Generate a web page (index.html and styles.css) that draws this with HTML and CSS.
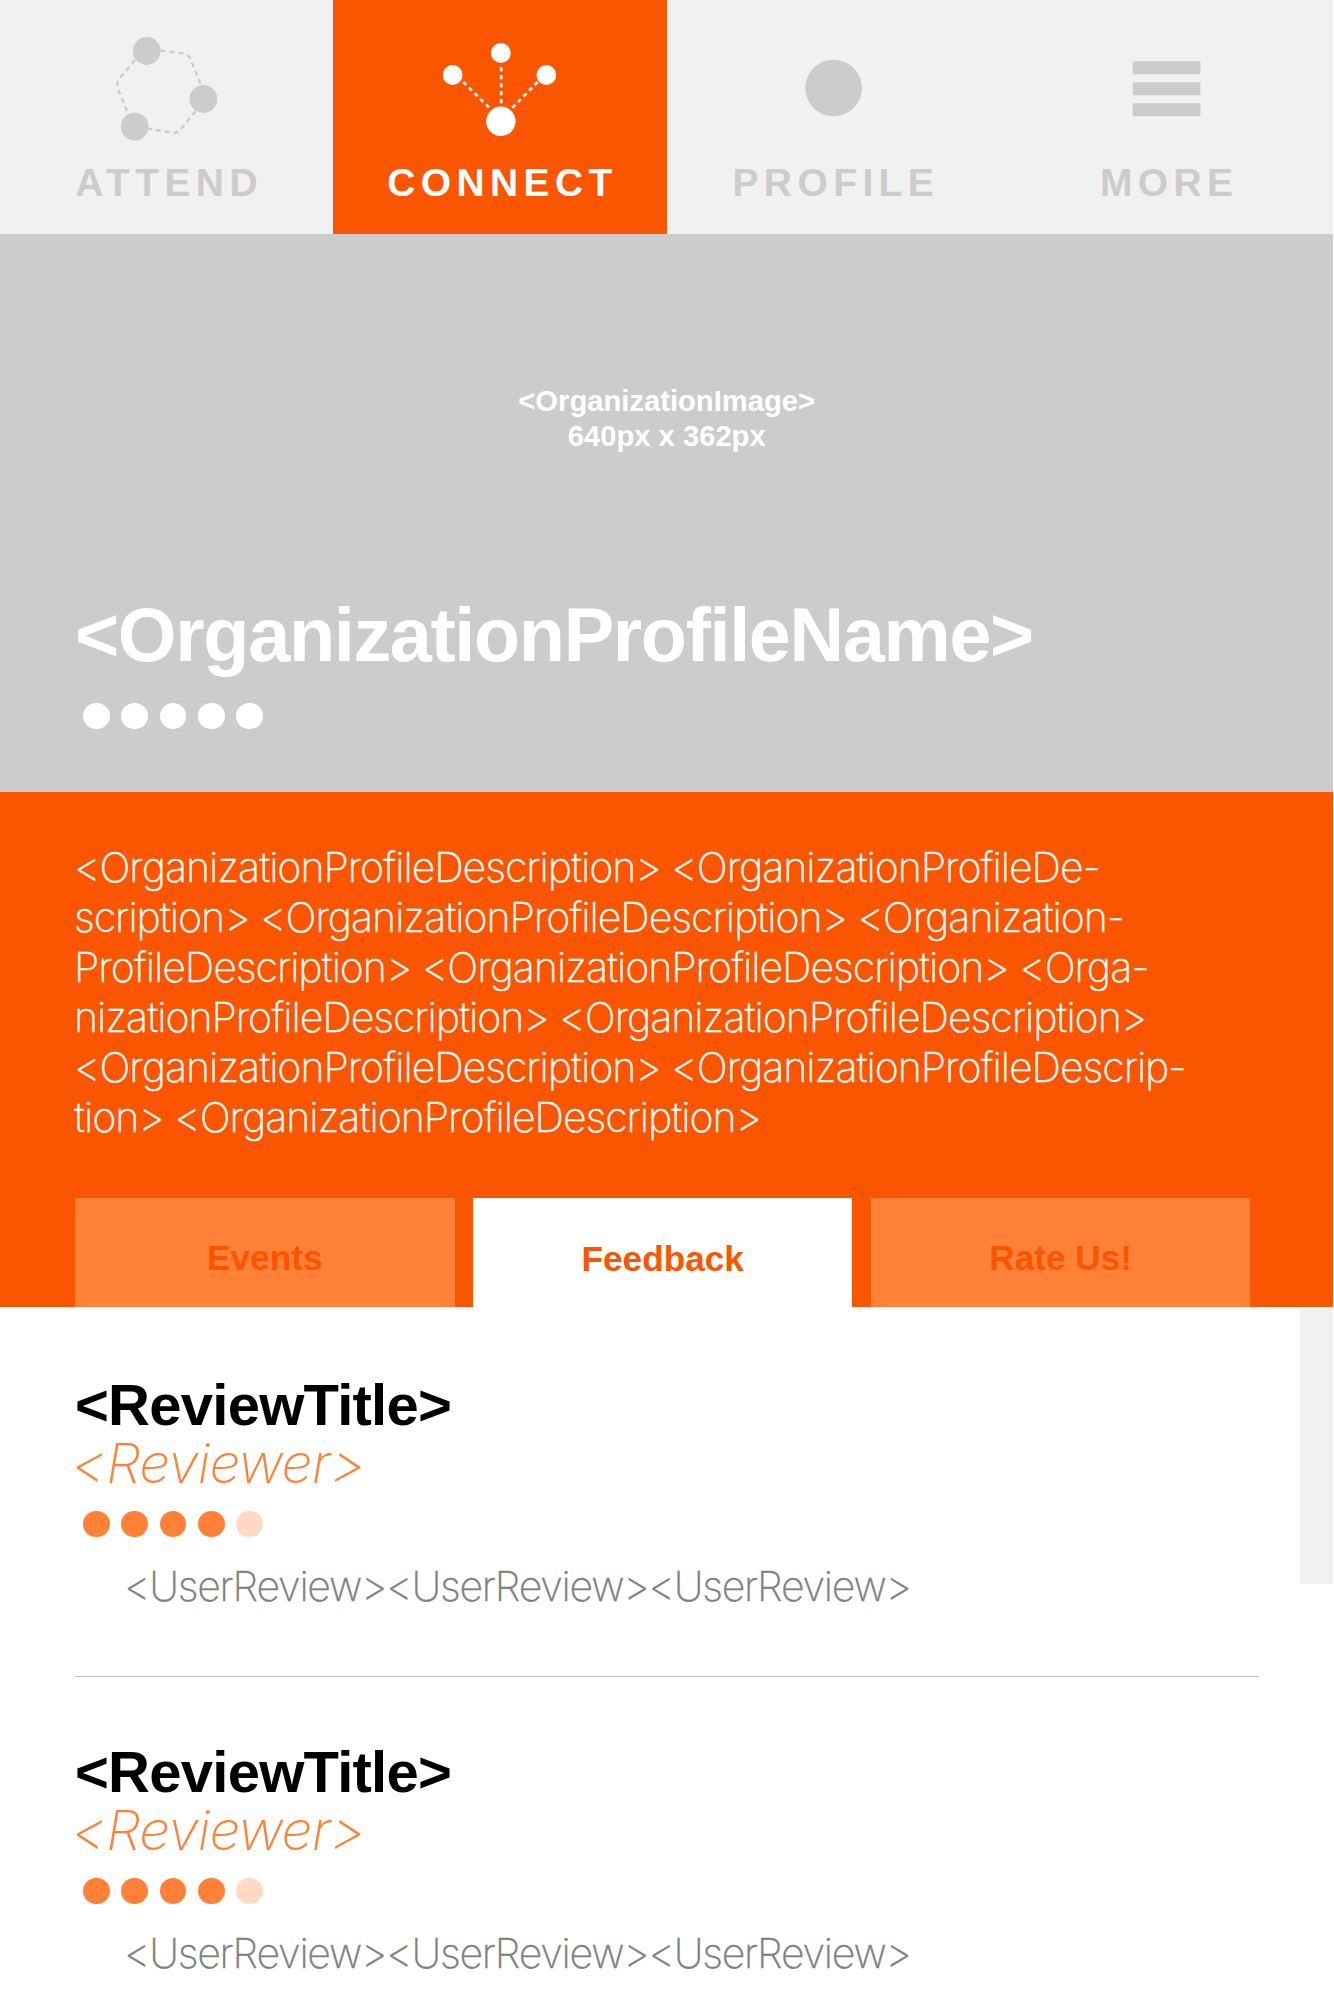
FILE: index.html
```html
<!DOCTYPE html>
<html lang="en">
<head>
<meta charset="utf-8">
<title>Organization Profile</title>
<link rel="stylesheet" href="styles.css">
</head>
<body>
<main class="page">
  <nav class="nav">
    <a class="nav-item">
      <svg class="nav-icon" viewBox="0 0 333.33 150">
        <g fill="currentColor"><circle cx="146.7" cy="51" r="13.9"/><circle cx="203.3" cy="99" r="13.9"/><circle cx="134.7" cy="126.7" r="13.9"/></g>
        <g fill="none" stroke="currentColor" stroke-width="2.4" stroke-dasharray="5 4"><path d="M160.500 50.500L183 53.500Q188.500 54.500 190.500 59L200.500 84"/><path d="M195.500 111L181 129Q178 133.500 173 133L148 128.500"/><path d="M127 111L118 89Q116 84 119 79L135 60"/></g>
      </svg>
      <span class="nav-label">ATTEND</span>
    </a>
    <a class="nav-item nav-item-active">
      <svg class="nav-icon" viewBox="333.33 0 333.33 150">
        <g fill="currentColor"><circle cx="501.200" cy="53" r="9.900"/><circle cx="453" cy="75" r="9.900"/><circle cx="546.700" cy="75" r="9.900"/><circle cx="501.200" cy="121.300" r="14.700"/></g>
        <g fill="none" stroke="currentColor" stroke-width="2.600" stroke-dasharray="4.200 3.800"><path d="M501.500 67V105"/><path d="M463.500 82L490.500 108.500"/><path d="M538 82L512 108.500"/></g>
      </svg>
      <span class="nav-label">CONNECT</span>
    </a>
    <a class="nav-item">
      <svg class="nav-icon" viewBox="666.67 0 333.33 150"><circle cx="833.300" cy="88" r="28.300" fill="currentColor"/></svg>
      <span class="nav-label">PROFILE</span>
    </a>
    <a class="nav-item">
      <svg class="nav-icon" viewBox="1000 0 333.33 150"><path fill="currentColor" d="M1132.700 61.300h67.700v13h-67.700zM1132.700 82.300h67.700v13h-67.700zM1132.700 103.300h67.700v13h-67.700z"/></svg>
      <span class="nav-label">MORE</span>
    </a>
  </nav>

  <header class="hero">
    <p class="hero-placeholder">&lt;OrganizationImage&gt;<br>640px x 362px</p>
    <h1 class="hero-name">&lt;OrganizationProfileName&gt;</h1>
    <div class="rating rating-light"><i></i><i></i><i></i><i></i><i></i></div>
  </header>

  <section class="about">
    <p class="about-text">&lt;OrganizationProfileDescription&gt; &lt;OrganizationProfileDe-<br>scription&gt; &lt;OrganizationProfileDescription&gt; &lt;Organization-<br>ProfileDescription&gt; &lt;OrganizationProfileDescription&gt; &lt;Orga-<br>nizationProfileDescription&gt; &lt;OrganizationProfileDescription&gt;<br>&lt;OrganizationProfileDescription&gt; &lt;OrganizationProfileDescrip-<br>tion&gt; &lt;OrganizationProfileDescription&gt;</p>
    <div class="tabs">
      <a class="tab">Events</a>
      <a class="tab tab-active">Feedback</a>
      <a class="tab">Rate Us!</a>
    </div>
  </section>

  <section class="feed">
    <div class="reviews">
      <article class="review">
        <h2 class="review-title">&lt;ReviewTitle&gt;</h2>
        <p class="review-author">&lt;Reviewer&gt;</p>
        <div class="rating"><i></i><i></i><i></i><i></i><i class="off"></i></div>
        <p class="review-body">&lt;UserReview&gt;&lt;UserReview&gt;&lt;UserReview&gt;</p>
      </article>
      <article class="review">
        <h2 class="review-title">&lt;ReviewTitle&gt;</h2>
        <p class="review-author">&lt;Reviewer&gt;</p>
        <div class="rating"><i></i><i></i><i></i><i></i><i class="off"></i></div>
        <p class="review-body">&lt;UserReview&gt;&lt;UserReview&gt;&lt;UserReview&gt;</p>
      </article>
    </div>
    <div class="scrollbar"></div>
  </section>
</main>
</body>
</html>
```
FILE: styles.css
```css
* { box-sizing: border-box; margin: 0; padding: 0; }

body {
  background: #fff;
  font-family: "Liberation Sans", Arial, sans-serif;
}

.page {
  width: 1333.4px;
  height: 2001px;
  overflow: hidden;
  display: flex;
  flex-direction: column;
}

.nav {
  display: grid;
  grid-template-columns: repeat(4, 1fr);
  height: 234px;
  flex: none;
  background: #f1f1f1;
}

.nav-item {
  display: flex;
  flex-direction: column;
  align-items: center;
  color: #ccc;
}

.nav-item-active { background: #fa5500; color: #fff; }

.nav-icon { display: block; width: 100%; height: 150px; }

.nav-label {
  font-size: 39px;
  font-weight: 700;
  line-height: 44px;
  margin-top: 11px;
  letter-spacing: 5.4px;
  padding-left: 5px;
}

.hero {
  height: 558px;
  flex: none;
  background: #ccc;
  color: #fff;
  padding: 150px 75px 0;
}

.hero-placeholder {
  font-size: 29.2px;
  font-weight: 700;
  line-height: 34.7px;
  text-align: center;
}

.hero-name {
  font-size: 75.6px;
  font-weight: 700;
  line-height: 86px;
  letter-spacing: -1.34px;
  margin-top: 139px;
  white-space: nowrap;
}

.rating {
  display: flex;
  gap: 11.5px;
  padding-left: 8.3px;
  color: #ff8137;
}

.rating i {
  width: 26.7px;
  height: 26.7px;
  border-radius: 50%;
  background: currentColor;
}

.rating .off { background: #ffd9c3; }

.rating-light { color: #fff; margin-top: 24.2px; }

.about {
  height: 515px;
  flex: none;
  background: #fa5500;
  color: #fff;
  padding: 50px 83px 0 75px;
  display: flex;
  flex-direction: column;
  justify-content: space-between;
}

.about-text {
  font-family: Inter, "Liberation Sans", sans-serif;
  font-weight: 200;
  font-size: 41px;
  line-height: 50px;
  letter-spacing: -1px;
  white-space: nowrap;
  margin-left: -1px;
  -webkit-text-stroke: 0.3px currentColor;
}

.tabs {
  display: grid;
  grid-template-columns: repeat(3, 1fr);
  gap: 18.4px;
  height: 109px;
}

.tab {
  background: #ff8137;
  color: #fa5500;
  font-size: 35.2px;
  font-weight: 700;
  line-height: 40px;
  padding-top: 40px;
  text-align: center;
}

.tab-active { background: #fff; padding-top: 41px; }

.feed {
  flex: 1;
  display: flex;
  justify-content: space-between;
}

.reviews { width: 1259px; padding-left: 75px; }

.review { height: 369px; padding-top: 67px; }

.review + .review { border-top: 1px solid #c4c4c4; padding-top: 64px; }

.review-title {
  font-size: 58px;
  font-weight: 700;
  line-height: 62px;
  letter-spacing: -0.75px;
}

.review-author {
  font-family: Inter, "Liberation Sans", sans-serif;
  font-weight: 200;
  font-style: italic;
  font-size: 55px;
  line-height: 54px;
  letter-spacing: -0.7px;
  color: #ff8137;
  margin-left: -3.5px;
}

.review .rating { margin-top: 20.6px; }

.review-body {
  font-family: Inter, "Liberation Sans", sans-serif;
  font-weight: 200;
  font-size: 41px;
  line-height: 50px;
  letter-spacing: -1.24px;
  color: #808080;
  margin-top: 23.7px;
  padding-left: 49px;
  -webkit-text-stroke: 0.3px currentColor;
}

.scrollbar {
  width: 33.4px;
  height: 275px;
  margin-top: 2px;
  background: #f1f1f1;
}
```
